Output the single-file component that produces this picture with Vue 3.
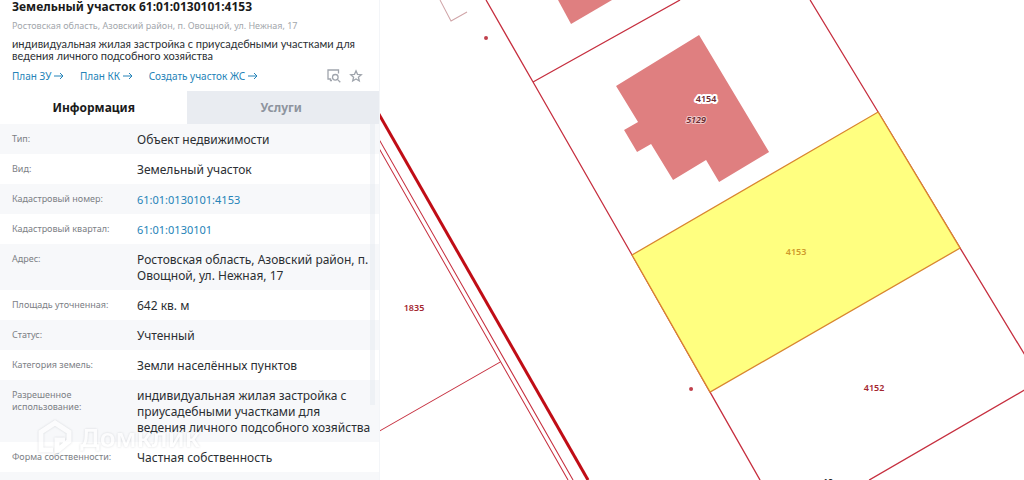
<template>
  <div class="page">
    <aside class="panel">
      <header class="header">
        <h1 class="title">Земельный участок 61:01:0130101:4153</h1>
        <p class="address">Ростовская область, Азовский район, п. Овощной, ул. Нежная, 17</p>
        <p class="description">индивидуальная жилая застройка с приусадебными участками для ведения личного подсобного хозяйства</p>
        <div class="actions">
          <a v-for="link in links" :key="link" class="link" href="#">
            {{ link }}
            <svg class="arrow" viewBox="0 0 10 8" aria-hidden="true">
              <path d="M0 4H9M6 1L9 4L6 7" />
            </svg>
          </a>
          <div class="tools">
            <button class="tool" type="button" aria-label="Найти на карте">
              <svg viewBox="0 0 14 14" aria-hidden="true">
                <path d="M5 11.5H3.5V10H1V1H11.5V4.5" />
                <circle cx="8.3" cy="8.3" r="2.8" />
                <path d="M10.4 10.4L13.3 13.2" />
              </svg>
            </button>
            <button class="tool" type="button" aria-label="В избранное">
              <svg viewBox="0 0 14 14" aria-hidden="true">
                <path d="M7 1.8L8.5 5.3L12.3 5.7L9.4 8.2L10.3 12L7 10L3.7 12L4.6 8.2L1.7 5.7L5.5 5.3Z" />
              </svg>
            </button>
          </div>
        </div>
      </header>

      <nav class="tabs">
        <button
          v-for="tab in tabs"
          :key="tab"
          type="button"
          class="tab"
          :class="{ active: activeTab === tab }"
          @click="activeTab = tab"
        >{{ tab }}</button>
      </nav>

      <div class="details">
        <table class="table">
          <tbody>
            <tr v-for="row in rows" :key="row.label">
              <th scope="row">{{ row.label }}</th>
              <td :class="{ number: row.link }">
                <a v-if="row.link" class="link" href="#">{{ row.value }}</a>
                <span v-else class="value">{{ row.value }}</span>
              </td>
            </tr>
          </tbody>
        </table>
        <div class="scrollbar"></div>
      </div>

      <div class="watermark">
        <svg viewBox="0 0 38 38" aria-hidden="true">
          <path d="M17 32H5V14L19 5L33 14V23L21 33V22H29" />
        </svg>
        <span>Домклик</span>
      </div>
    </aside>

    <main class="map">
      <svg class="plan" viewBox="380 0 644 480" preserveAspectRatio="xMinYMin slice">
        <polygon class="building" points="558,0 571,24 612,0" />
        <polygon
          class="building"
          points="699,35 769,152 719,182 706,160 673,180 651,144 637,152 624,130 638,122 616,86"
        />
        <path class="fence" d="M440 0L451 21L467 12" />
        <path class="road" d="M376 109L588 480" />
        <path class="border thin" d="M376 134L573 480M376 143L568 480M500 362L376 433" />
        <path class="border" d="M486 0L533 82L632 255L710 392L760 480M533 82L680 0" />
        <path class="border" d="M810 0L878 112L960 248L1026 357M1026 389L869 480" />
        <polygon class="selected" points="878,112 960,248 710,392 632,255" />
        <circle class="point" cx="486" cy="38" r="2" />
        <circle class="point" cx="691" cy="389" r="2" />
        <text
          v-for="label in labels"
          :key="label.text"
          class="label"
          :class="label.type"
          :x="label.x"
          :y="label.y"
        >{{ label.text }}</text>
      </svg>
    </main>
  </div>
</template>

<script setup>
import { ref } from 'vue'

const links = ['План ЗУ', 'План КК', 'Создать участок ЖС']
const tabs = ['Информация', 'Услуги']
const activeTab = ref('Информация')

const rows = [
  { label: 'Тип:', value: 'Объект недвижимости' },
  { label: 'Вид:', value: 'Земельный участок' },
  { label: 'Кадастровый номер:', value: '61:01:0130101:4153', link: true },
  { label: 'Кадастровый квартал:', value: '61:01:0130101', link: true },
  { label: 'Адрес:', value: 'Ростовская область, Азовский район, п. Овощной, ул. Нежная, 17' },
  { label: 'Площадь уточненная:', value: '642 кв. м' },
  { label: 'Статус:', value: 'Учтенный' },
  { label: 'Категория земель:', value: 'Земли населённых пунктов' },
  {
    label: 'Разрешенное использование:',
    value: 'индивидуальная жилая застройка с приусадебными участками для\nведения личного подсобного хозяйства',
  },
  { label: 'Форма собственности:', value: 'Частная собственность' },
  { label: '', value: '' },
]

const labels = [
  { text: '4154', x: 706, y: 102, type: 'outlined' },
  { text: '5129', x: 696, y: 123, type: 'house' },
  { text: '4153', x: 796, y: 255, type: 'muted' },
  { text: '4152', x: 874, y: 391 },
  { text: '1835', x: 414, y: 311 },
  { text: '10', x: 828, y: 485, type: 'dark' },
]
</script>

<style>
body {
  margin: 0;
}
</style>

<style scoped>
.page {
  display: flex;
  height: 100vh;
  overflow: hidden;
  background: #fff;
  font-family: "Noto Sans", sans-serif;
  color: #2b2f33;
}
.panel {
  position: relative;
  flex: 0 0 37%;
  display: flex;
  flex-direction: column;
  overflow: hidden;
  border-right: 1px solid #f3f5f8;
}
.header {
  padding: 0 12px 7px;
}
.title {
  margin: 0;
  font-size: 12px;
  line-height: 14px;
  font-weight: 700;
  color: #1a1a1a;
}
.address {
  margin: 5px 0;
  font-size: 9px;
  line-height: 14px;
  color: #a3a7ac;
}
.description {
  margin: 0;
  font-family: Lato, "Noto Sans", sans-serif;
  font-size: 11px;
  line-height: 12px;
}
.actions {
  display: flex;
  align-items: center;
  gap: 16px;
  margin-top: 6px;
  font-size: 10px;
  line-height: 16px;
}
.link {
  color: #2583b8;
  text-decoration: none;
}
.arrow {
  width: 10px;
  height: 8px;
  fill: none;
  stroke: currentColor;
}
.tools {
  display: flex;
  gap: 8px;
  margin-left: auto;
  padding-right: 4px;
}
.tool {
  width: 14px;
  height: 14px;
  padding: 0;
  border: 0;
  background: none;
}
.tool svg {
  display: block;
  fill: none;
  stroke: #a0a5ad;
  stroke-width: 1.3;
}
.tabs {
  display: flex;
  padding-right: 4px;
  background: #e9ecf1;
}
.tab {
  flex: 1;
  height: 33px;
  padding: 0;
  border: 0;
  background: none;
  font: 700 12px/16px "Noto Sans", sans-serif;
  color: #8e949e;
}
.tab.active {
  background: #fff;
  color: #1a1a1a;
}
.details {
  position: relative;
  flex: 1;
  overflow: hidden;
}
.table {
  width: 100%;
  border-collapse: collapse;
  table-layout: fixed;
}
.table tr {
  height: 30px;
}
.table tr:nth-child(odd) {
  background: #f7f8fa;
}
.table th {
  width: 113px;
  padding: 9px 12px 0;
  font-size: 9px;
  line-height: 12px;
  font-weight: 400;
  text-align: left;
  vertical-align: top;
  color: #7c8085;
}
.table td {
  padding: 8px 4px 6px 0;
  font-size: 12px;
  line-height: 16px;
  vertical-align: top;
}
.table td.number {
  font-size: 11px;
}
.value {
  white-space: pre-line;
}
.scrollbar {
  position: absolute;
  top: 0;
  right: 4px;
  width: 5px;
  height: 79%;
  background: rgba(225, 229, 238, 0.4);
}
.watermark {
  position: absolute;
  left: 36px;
  bottom: 24px;
  display: flex;
  align-items: center;
  gap: 6px;
  font-size: 26px;
  line-height: 36px;
  font-weight: 600;
  color: #fff;
  opacity: 0.65;
  filter: drop-shadow(0 0 1px rgba(120, 125, 135, 0.4));
  pointer-events: none;
}
.watermark svg {
  width: 38px;
  height: 38px;
  fill: none;
  stroke: currentColor;
  stroke-width: 5;
}
.map {
  flex: 1;
  min-width: 0;
}
.plan {
  display: block;
  width: 100%;
  height: 100%;
}
.building {
  fill: #df7f80;
}
.fence {
  fill: none;
  stroke: #d0a5a8;
}
.road {
  stroke: #c00d16;
  stroke-width: 3;
}
.border {
  fill: none;
  stroke: #c62f3f;
  stroke-width: 1.3;
}
.border.thin {
  stroke-width: 1;
}
.selected {
  fill: #ffff80;
  stroke: #d9862f;
  stroke-width: 1.3;
}
.point {
  fill: #c0404c;
}
.label {
  font-family: "Noto Sans", sans-serif;
  font-size: 9px;
  font-weight: 600;
  text-anchor: middle;
  fill: #a3262f;
}
.label.outlined,
.label.house {
  fill: #6b2a30;
  stroke: #fff;
  stroke-width: 4;
  stroke-linejoin: round;
  paint-order: stroke;
}
.label.house {
  font-style: italic;
  stroke: #f0c8c8;
  stroke-width: 2;
}
.label.muted {
  fill: #cf9a2c;
}
.label.dark {
  fill: #222;
}
</style>
